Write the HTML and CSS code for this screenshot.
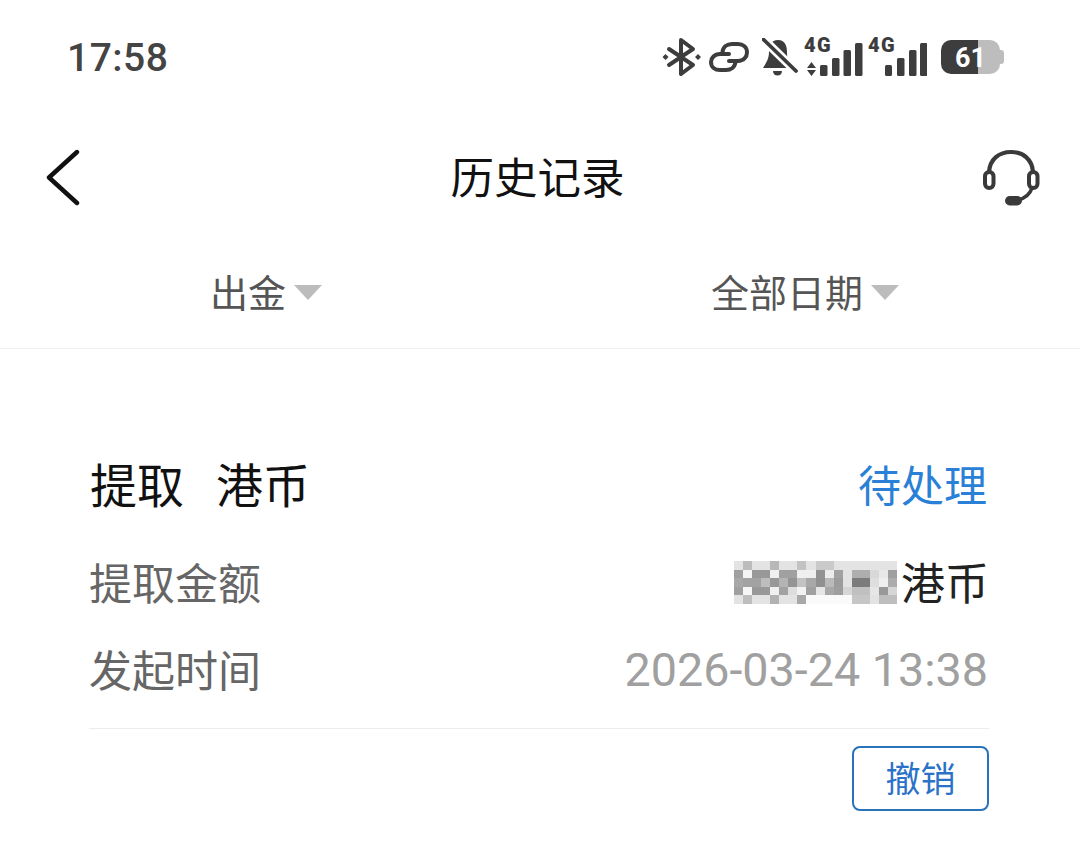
FILE: index.html
```html
<!DOCTYPE html>
<html lang="zh-CN">
<head>
<meta charset="utf-8">
<title>历史记录</title>
<link rel="stylesheet" href="styles.css">
</head>
<body>
<div class="page">
  <div class="status">
    <span class="time">17:58</span>
    <div class="status-icons">
      <svg class="i-bt" width="38" height="38" viewBox="0 0 38 38"><path d="M6 11 L30 27 L18 36 V2 L30 11 L6 27" fill="none" stroke="#3d3d3d" stroke-width="4" stroke-linejoin="round" stroke-linecap="round"/><path d="M2.5 16 L5.5 19 L2.5 22 L-0.500 19 Z M35 16 L38 19 L35 22 L32 19 Z" fill="#3d3d3d"/></svg>
      <svg class="i-link" width="40" height="30" viewBox="0 0 40 30"><path d="M20 12 H11 C5.500 12 2 16 2 20 C2 25 6 28 11 28 H17 C22 28 26 25 26.500 20" fill="none" stroke="#3d3d3d" stroke-width="4" stroke-linecap="round"/><path d="M20 19 H29 C34.500 19 38 15 38 10.500 C38 5 34 2 29 2 H23 C18 2 14 5 13.500 10" fill="none" stroke="#3d3d3d" stroke-width="4" stroke-linecap="round"/></svg>
      <svg class="i-bell" width="36" height="38" viewBox="0 0 36 38"><path d="M16 2 C9 2 7 8 7 14 C7 21 4 25 1 30 H30 C26 25 25 21 25 14 C25 8 23 2 16 2 Z" fill="#3d3d3d"/><path d="M11 33 H20 C20 36 18 37.500 15.500 37.500 C13 37.500 11 36 11 33 Z" fill="#3d3d3d"/><path d="M-1 -1 L36 35" stroke="#fff" stroke-width="9"/><path d="M1.500 1.500 L34 33" stroke="#3d3d3d" stroke-width="3.8" stroke-linecap="round"/></svg>
      <div class="signal sig-a">
        <span class="net">4G</span>
        <svg width="58" height="38" viewBox="0 0 58 38"><path d="M2 30 L6.500 24 L11 30 Z M2 32 H11 L6.500 38 Z" fill="#3d3d3d"/><rect x="15" y="27" width="7.500" height="11" rx="1.500" fill="#3d3d3d"/><rect x="27" y="20" width="7.500" height="18" rx="1.500" fill="#3d3d3d"/><rect x="38.500" y="12" width="7.500" height="26" rx="1.500" fill="#3d3d3d"/><rect x="50" y="5" width="7.500" height="33" rx="1.500" fill="#3d3d3d"/></svg>
      </div>
      <div class="signal sig-b">
        <span class="net">4G</span>
        <svg width="58" height="38" viewBox="0 0 58 38"><rect x="16" y="27" width="7" height="11" rx="1.500" fill="#3d3d3d"/><rect x="28" y="20" width="7.500" height="18" rx="1.500" fill="#3d3d3d"/><rect x="40" y="12" width="7.500" height="26" rx="1.500" fill="#3d3d3d"/><rect x="51" y="5" width="7.500" height="33" rx="1.500" fill="#3d3d3d"/></svg>
      </div>
      <div class="battery">
        <span class="batt-fill"></span>
        <span class="batt-cap"></span>
        <span class="batt-num">61</span>
      </div>
    </div>
  </div>

  <header class="nav">
    <svg class="back" width="36" height="58" viewBox="0 0 36 58"><path d="M32 3 L4 28.5 L32 54" fill="none" stroke="#111" stroke-width="4.4" stroke-linecap="round" stroke-linejoin="round"/></svg>
    <h1 class="title">历史记录</h1>
    <svg class="support" width="58" height="58" viewBox="0 0 58 58"><path d="M7 23 C8 10 17 3 29 3 C41 3 50 10 51 23" fill="none" stroke="#3a3a3a" stroke-width="4.2"/><rect x="3" y="23" width="8.5" height="16" rx="4.2" fill="none" stroke="#3a3a3a" stroke-width="4"/><rect x="47" y="23" width="8.5" height="16" rx="4.2" fill="none" stroke="#3a3a3a" stroke-width="4"/><path d="M50 39 C48 45 44 49 36 51" fill="none" stroke="#3a3a3a" stroke-width="3.6"/><rect x="23" y="47" width="17" height="9.5" rx="4.7" fill="#3a3a3a"/></svg>
  </header>

  <div class="filters">
    <div class="filter filter-a"><span>出金</span><i class="caret"></i></div>
    <div class="filter filter-b"><span>全部日期</span><i class="caret"></i></div>
  </div>

  <main class="card">
    <div class="card-head">
      <span class="kind">提取&nbsp;&nbsp;港币</span>
      <span class="state">待处理</span>
    </div>
    <div class="row">
      <span class="label">提取金额</span>
      <span class="amount">
        <svg class="mosaic" width="163" height="43" viewBox="0 0 18 5" preserveAspectRatio="none" shape-rendering="crispEdges">
          <rect x="0" y="0" width="18" height="5" fill="#e3e3e3"/>
          <rect x="1" y="0" width="1" height="1" fill="#bcbcbc"/><rect x="4" y="0" width="1" height="1" fill="#b8b8b8"/><rect x="7" y="0" width="1" height="1" fill="#c2c2c2"/><rect x="9" y="0" width="2" height="1" fill="#cacaca"/>
          <rect x="0" y="1" width="1" height="1" fill="#a0a0a0"/><rect x="1" y="1" width="1" height="1" fill="#f4f4f4"/><rect x="2" y="1" width="2" height="1" fill="#989898"/><rect x="4" y="1" width="1" height="1" fill="#f0f0f0"/><rect x="5" y="1" width="2" height="1" fill="#a0a0a0"/><rect x="7" y="1" width="2" height="1" fill="#efefef"/><rect x="9" y="1" width="1" height="1" fill="#929292"/><rect x="10" y="1" width="1" height="1" fill="#ececec"/><rect x="11" y="1" width="1" height="1" fill="#a2a2a2"/><rect x="13" y="1" width="2" height="1" fill="#aeaeae"/><rect x="15" y="1" width="1" height="1" fill="#d8d8d8"/><rect x="16" y="1" width="1" height="1" fill="#e8e8e8"/><rect x="17" y="1" width="1" height="1" fill="#a0a0a0"/>
          <rect x="0" y="2" width="1" height="1" fill="#a8a8a8"/><rect x="1" y="2" width="2" height="1" fill="#a2a2a2"/><rect x="3" y="2" width="1" height="1" fill="#bdbdbd"/><rect x="4" y="2" width="1" height="1" fill="#989898"/><rect x="5" y="2" width="1" height="1" fill="#b4b4b4"/><rect x="6" y="2" width="1" height="1" fill="#949494"/><rect x="7" y="2" width="1" height="1" fill="#c2c2c2"/><rect x="8" y="2" width="1" height="1" fill="#a8a8a8"/><rect x="9" y="2" width="1" height="1" fill="#909090"/><rect x="10" y="2" width="1" height="1" fill="#bababa"/><rect x="11" y="2" width="1" height="1" fill="#9c9c9c"/><rect x="13" y="2" width="2" height="1" fill="#7c7c7c"/><rect x="15" y="2" width="1" height="1" fill="#dedede"/><rect x="16" y="2" width="1" height="1" fill="#efefef"/><rect x="17" y="2" width="1" height="1" fill="#acacac"/>
          <rect x="0" y="3" width="1" height="1" fill="#a0a0a0"/><rect x="1" y="3" width="1" height="1" fill="#f6f6f6"/><rect x="2" y="3" width="2" height="1" fill="#989898"/><rect x="4" y="3" width="1" height="1" fill="#f0f0f0"/><rect x="5" y="3" width="1" height="1" fill="#a2a2a2"/><rect x="6" y="3" width="1" height="1" fill="#dddddd"/><rect x="7" y="3" width="1" height="1" fill="#f2f2f2"/><rect x="8" y="3" width="1" height="1" fill="#a0a0a0"/><rect x="9" y="3" width="1" height="1" fill="#e6e6e6"/><rect x="10" y="3" width="1" height="1" fill="#a8a8a8"/><rect x="11" y="3" width="1" height="1" fill="#9e9e9e"/><rect x="12" y="3" width="1" height="1" fill="#d6d6d6"/><rect x="13" y="3" width="2" height="1" fill="#c0c0c0"/><rect x="15" y="3" width="1" height="1" fill="#e6e6e6"/><rect x="16" y="3" width="1" height="1" fill="#989898"/><rect x="17" y="3" width="1" height="1" fill="#d6d6d6"/>
          <rect x="1" y="4" width="1" height="1" fill="#bebebe"/><rect x="4" y="4" width="1" height="1" fill="#b2b2b2"/><rect x="7" y="4" width="1" height="1" fill="#a8a8a8"/><rect x="8" y="4" width="4" height="1" fill="#fafafa"/><rect x="12" y="4" width="1" height="1" fill="#fafafa"/><rect x="13" y="4" width="2" height="1" fill="#c6c6c6"/><rect x="16" y="4" width="2" height="1" fill="#bebebe"/>
        </svg>
        <span class="currency">港币</span>
      </span>
    </div>
    <div class="row">
      <span class="label">发起时间</span>
      <span class="date">2026-03-24 13:38</span>
    </div>
    <div class="actions">
      <button class="cancel" type="button">撤销</button>
    </div>
  </main>
</div>
</body>
</html>
```
FILE: styles.css
```css
* { box-sizing: border-box; }
html, body { margin: 0; padding: 0; background: #fff; }
body { font-family: "Noto Sans CJK SC", "Noto Sans", sans-serif; }
.page { width: 1080px; height: 851px; overflow: hidden; background: #fff; }

.status { height: 114px; padding: 0 76px 0 67px; display: flex; align-items: center; justify-content: space-between; }
.time { font-family: Roboto, sans-serif; font-weight: 500; font-size: 39px; color: #444; letter-spacing: 0.5px; margin-top: 2px; }
.status-icons { display: flex; align-items: center; }
.i-bt { margin-right: 8px; overflow: visible; }
.i-link { margin-right: 13px; }
.i-bell { margin-right: 7px; }

.signal { position: relative; width: 58px; height: 38px; }
.signal svg { display: block; }
.sig-a { margin-right: 6px; }
.sig-b { margin-right: 14px; }
.net { position: absolute; left: -1px; top: -3px; font-family: Roboto, sans-serif; font-weight: 900; font-size: 20px; line-height: 20px; letter-spacing: 1.5px; color: #3d3d3d; }

.battery { position: relative; width: 63px; height: 34px; display: flex; }
.batt-fill { width: 100%; height: 100%; border-radius: 10px; background: linear-gradient(90deg, #3d3d3d 0 62%, #bdbdbd 62% 100%); margin-right: 4px; }
.batt-cap { position: absolute; right: 0; top: 10px; width: 4px; height: 14px; border-radius: 0 3px 3px 0; background: #bdbdbd; }
.batt-num { position: absolute; left: 14px; top: 0; font-family: Roboto, sans-serif; font-weight: 700; font-size: 27px; line-height: 36px; color: #fff; }

.nav { height: 128px; padding: 0 40px 0 45px; display: flex; align-items: center; justify-content: space-between; }
.title { margin: 0 0 6px 12px; font-size: 43.5px; font-weight: 400; color: #111; }

.filters { height: 107px; padding-bottom: 9px; display: flex; align-items: center; border-bottom: 1px solid #efefef; }
.filter { display: flex; align-items: center; font-size: 38px; color: #555; }
.filter-a { margin-left: 210px; }
.filter-b { margin-left: 389px; }
.caret { width: 0; height: 0; margin-left: 8px; margin-top: 4px; border-left: 14px solid transparent; border-right: 14px solid transparent; border-top: 15px solid #bcbcbc; }

.card { padding: 102px 91px 0 89px; }
.card-head { height: 62px; display: flex; align-items: center; justify-content: space-between; margin-bottom: 24px; }
.kind { font-size: 47px; color: #111; margin-left: 1px; word-spacing: 5.5px; }
.state { font-size: 43px; color: #2a7fd6; margin: 2px 2px 0 0; }
.row { height: 87px; display: flex; align-items: center; justify-content: space-between; }
.label { font-size: 43px; color: #666; }
.amount { display: flex; align-items: center; }
.mosaic { display: block; margin: 4px 4px 0 0; }
.currency { font-size: 44px; color: #222; }
.date { font-family: Roboto, sans-serif; font-size: 46.7px; color: #a0a0a0; margin: 4px 1px 0 0; }
.actions { margin-top: 17px; padding-top: 17px; border-top: 1px solid #ececec; display: flex; justify-content: flex-end; }
.cancel { width: 137px; height: 65px; padding: 0 0 4px; background: #fff; border: 2px solid #2a72ba; border-radius: 8px; font-family: inherit; font-size: 35px; line-height: 1; color: #2a72c8; }
```
